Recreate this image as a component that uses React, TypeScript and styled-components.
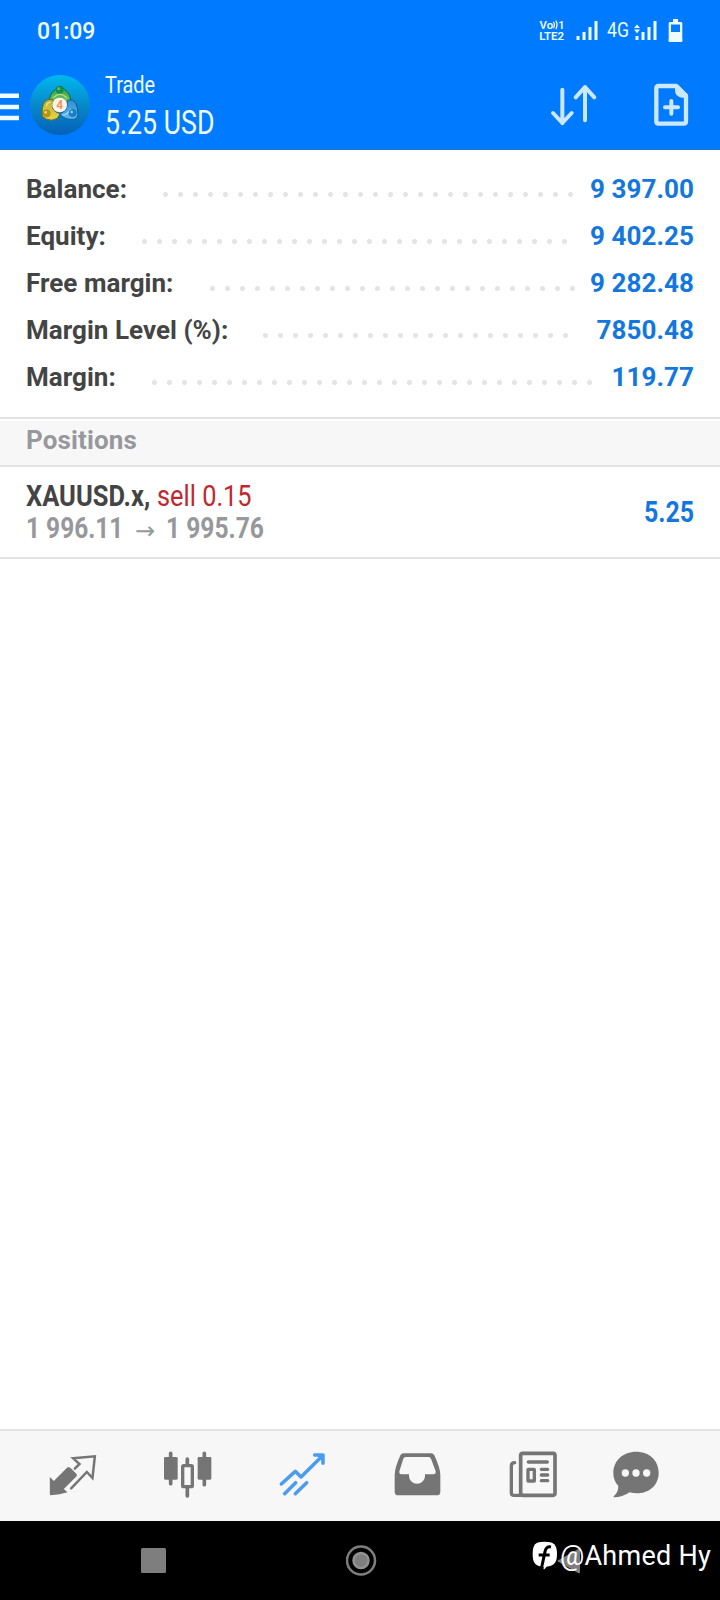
import React from "react";
import styled, { createGlobalStyle } from "styled-components";

const GlobalStyle = createGlobalStyle`
  * { box-sizing: border-box; }
  body { margin: 0; background: #fff; font-family: Roboto, "Liberation Sans", sans-serif; }
  svg { display: block; flex: none; }
`;

const Screen = styled.div`
  position: relative;
  display: flex;
  flex-direction: column;
  width: 720px;
  height: 1600px;
  overflow: hidden;
  background: #fff;
`;

const Condensed = styled.span<{ $size: number; $scale: number; $width: number; $weight?: number; $color?: string }>`
  display: block;
  flex: none;
  width: ${(p) => p.$width}px;
  font-size: ${(p) => p.$size}px;
  font-weight: ${(p) => p.$weight ?? 400};
  color: ${(p) => p.$color ?? "inherit"};
  white-space: pre;
  text-align: left;
  transform: scaleX(${(p) => p.$scale});
  transform-origin: left center;
`;

const Header = styled.header`
  height: 150px;
  background: #007aff;
  border-bottom: 1px solid #1a74cf;
  color: #effcff;
`;

const StatusBar = styled.div`
  display: flex;
  align-items: center;
  justify-content: space-between;
  height: 60px;
  padding: 2px 37px 0;
`;

const Clock = styled.span`
  padding-top: 2px;
  font-size: 23px;
  font-weight: 500;
  line-height: 26px;
`;

const StatusIcons = styled.div`
  display: flex;
  align-items: center;
`;

const Spacer = styled.span<{ $width: number }>`
  width: ${(p) => p.$width}px;
`;

const NetworkType = styled.span`
  width: 21px;
  margin: 0 6.500px 3px 7.500px;
`;

const Toolbar = styled.div`
  display: flex;
  align-items: center;
  height: 89px;
`;

const TitleBlock = styled.div`
  display: flex;
  flex-direction: column;
  flex: 1;
  padding-bottom: 2px;
  padding-left: 15px;
  line-height: 38px;
`;

const Summary = styled.section`
  height: 267px;
  padding: 15px 26px 0;
`;

const SummaryRow = styled.div`
  display: flex;
  align-items: center;
  height: 47px;
  font-size: 26px;
  font-weight: 700;
  color: #444;
`;

const Label = styled.span`
  flex: 1;
  letter-spacing: 0.03px;
`;

const Leader = styled.span<{ $count: number }>`
  width: ${(p) => p.$count * 15}px;
  height: 15px;
  margin-top: 11px;
  background: radial-gradient(circle at 7.5px 7.5px, #e4e4e4 2.1px, transparent 2.9px) 0 0 / 15px 15px;
`;

const Value = styled.span<{ $width: number }>`
  width: ${(p) => p.$width}px;
  text-align: right;
  white-space: nowrap;
  letter-spacing: 0.05px;
  color: #1377dd;
`;

const SectionTitle = styled.div`
  height: 50px;
  padding: 0 26px;
  border-top: 2px solid #e2e2e3;
  border-bottom: 2px solid #e2e2e3;
  background: linear-gradient(#fff 2px, #f7f7f7 2px);
  color: #97989c;
  font-size: 26px;
  font-weight: 700;
  letter-spacing: 0.12px;
  line-height: 43px;
`;

const Position = styled.div`
  display: flex;
  align-items: center;
  height: 92px;
  padding: 0 26px 2px;
  border-bottom: 2px solid #e2e2e3;
`;

const PositionInfo = styled.div`
  flex: 1;
`;

const Line = styled.div`
  display: flex;
  align-items: center;
  height: 32px;
`;

const Arrow = styled.span`
  width: 35px;
  padding: 8px 0 0 4px;
  font: 24px "DejaVu Sans", sans-serif;
  color: #97989c;
`;

const Content = styled.main`
  flex: 1;
`;

const TabBar = styled.nav`
  display: flex;
  height: 92px;
  padding-left: 15px;
  border-top: 2px solid #e2e2e3;
  background: #f7f7f7;
`;

const Tab = styled.div<{ $narrow?: boolean }>`
  display: flex;
  align-items: center;
  justify-content: center;
  width: ${(p) => (p.$narrow ? 92 : 115)}px;
  color: #757575;
`;

const SystemNav = styled.div`
  display: flex;
  align-items: center;
  justify-content: space-between;
  height: 79px;
  padding: 0 140px 0 141px;
  background: #000;
`;

const Watermark = styled.div`
  position: absolute;
  right: 6px;
  bottom: 26px;
  display: flex;
  align-items: center;
  gap: 2px;
  color: #fff;
`;

const Handle = styled.span`
  width: 154px;
  font-size: 27px;
  font-weight: 400;
  line-height: 36px;
  letter-spacing: 0.25px;
  white-space: nowrap;
`;

const summary = [
  { label: "Balance:", value: "9 397.00", count: 28, end: 116.5 },
  { label: "Equity:", value: "9 402.25", count: 29, end: 122.5 },
  { label: "Free margin:", value: "9 282.48", count: 25, end: 114.5 },
  { label: "Margin Level (%):", value: "7850.48", count: 21, end: 121.5 },
  { label: "Margin:", value: "119.77", count: 30, end: 97.5 },
];

const VolteIcon = () => (
  <svg width="26" height="22" viewBox="0 0 26 22" fill="#effcff" fontFamily="Roboto" fontWeight="600">
    <text x="0.6" y="8.500" fontSize="11" textLength="13.500" lengthAdjust="spacingAndGlyphs">Vo</text>
    <path d="M14.400 1.800q2 3 0 6.400M16.800 .6q2.400 4.200 0 8.600" fill="none" stroke="#effcff" strokeWidth="1.300" />
    <text x="19.300" y="8.500" fontSize="11">1</text>
    <text x="0.200" y="19.500" fontSize="11.500" textLength="24.800" lengthAdjust="spacingAndGlyphs">LTE2</text>
  </svg>
);

const SignalIcon = ({ data }: { data?: boolean }) => (
  <svg width="24" height="20" viewBox="0 0 24 20" fill="#effcff">
    <path d="M1.500 15h3v4h-3zM7.500 11h3v8h-3zM13.500 6h3v13h-3zM19.500 0h3v19h-3z" />
    {data && <path d="M0 7l3-3.600L6 7zM0 8.600h6l-3 3.600z" />}
  </svg>
);

const BatteryIcon = () => (
  <svg width="15" height="24" viewBox="0 0 15 24">
    <path d="M5 0h5v3h3q1.300 0 1.300 1.300v17.400q0 1.300-1.300 1.300H2Q.7 23 .7 21.700V4.300Q.7 3 2 3h3z" fill="#effcff" />
    <path d="M3 5.500h9v7.500H3z" fill="#007aff" />
    <path d="M.7 20h13.600v1.700q0 1.300-1.300 1.300H2Q.7 23 .7 21.700z" fill="#effcff" />
  </svg>
);

const MenuIcon = () => (
  <svg width="19" height="30" viewBox="0 0 19 30" fill="#effcff" style={{ marginTop: 4 }}>
    <path d="M0 1.500h19v4.500H0zM0 12.700h19v4.500H0zM0 23.800h19v4.500H0z" />
  </svg>
);

const Avatar = () => (
  <svg width="60" height="60" viewBox="0 0 180 180" style={{ marginLeft: 11 }}>
    <defs>
      <linearGradient id="sky" x1="0" y1="0" x2="0" y2="1">
        <stop offset="0" stopColor="#00b8ee" />
        <stop offset=".5" stopColor="#0789cb" />
        <stop offset="1" stopColor="#0560b8" />
      </linearGradient>
      <linearGradient id="leaf" x1="0" y1="0" x2="0" y2="1">
        <stop offset="0" stopColor="#2c9c4a" />
        <stop offset="1" stopColor="#8bcf67" />
      </linearGradient>
      <linearGradient id="gold" x1="0" y1="0" x2="0" y2="1">
        <stop offset="0" stopColor="#b9b23a" />
        <stop offset="1" stopColor="#e6d548" />
      </linearGradient>
      <linearGradient id="water" x1="0" y1="0" x2="0" y2="1">
        <stop offset="0" stopColor="#2f8fd0" />
        <stop offset="1" stopColor="#5cb9ee" />
      </linearGradient>
    </defs>
    <circle cx="90" cy="90" r="90" fill="url(#sky)" />
    <g strokeWidth="3">
      <path d="M76 44Q90 24 104 44Q120 54 122 76L112 96H66L58 76Q60 54 76 44z" fill="url(#leaf)" stroke="#126b3c" />
      <path d="M44 80Q58 68 70 76L68 101Q78 116 91 115L82 130Q65 140 48 132L37 124Q34 96 44 80z" fill="url(#gold)" stroke="#6b671f" />
      <path d="M112 77Q128 70 137 84Q144 98 144 118Q142 135 124 133Q104 134 88 116Q114 112 112 77z" fill="url(#water)" stroke="#155b99" />
      <path d="M70 68Q90 48 111 69" fill="none" stroke="#b4df85" strokeWidth="4" />
      <path d="M49 94Q50 82 62 82" fill="none" stroke="#e9e38c" strokeWidth="4" />
      <path d="M98 121Q112 120 123 102" fill="none" stroke="#a9dcf8" strokeWidth="4" />
    </g>
    <circle cx="89" cy="44" r="11" fill="#159346" stroke="#126b3c" />
    <circle cx="50" cy="115" r="11" fill="#b99611" stroke="#806f1f" />
    <circle cx="128" cy="114" r="11" fill="#1981cc" stroke="#155b99" />
    <circle cx="86" cy="41" r="4" fill="#63c77a" />
    <circle cx="47" cy="112" r="4" fill="#efdd61" />
    <circle cx="125" cy="111" r="4" fill="#83cff5" />
    <circle cx="89" cy="90" r="22" fill="#f8f4ef" />
    <text x="89" y="103" fontSize="36" fontWeight="700" textAnchor="middle" fill="#ef9650">4</text>
  </svg>
);

const SortIcon = () => (
  <svg width="50" height="44" viewBox="0 0 150 132" fill="none" stroke="#cce8ff" strokeWidth="12" strokeLinecap="round" strokeLinejoin="round">
    <path d="M43 20V121M15 90L43 120L71 90M111 112V12M83 43L111 12L139 43" />
  </svg>
);

const NewOrderIcon = () => (
  <svg width="36" height="44" viewBox="0 0 108 132" style={{ margin: "1px 31px 0 55px" }}>
    <path d="M17 9H70L99 39V115Q99 122 92 122H17Q10 122 10 115V16Q10 9 17 9z" fill="none" stroke="#cce8ff" strokeWidth="13" strokeLinejoin="round" />
    <path d="M66 6H76L104 34V44H86Q66 41 66 22z" fill="#cce8ff" />
    <path d="M55 54V92M36 73H75" stroke="#cce8ff" strokeWidth="12" strokeLinecap="round" />
  </svg>
);

const QuotesIcon = () => (
  <svg width="60" height="60" viewBox="129.500 77 180 180" fill="currentColor">
    <path d="M150 170L162 182L203 141Q209 139 213 144L231 162Q232 166 229 169L192 206L203 216Q180 223 153 225Q149 224 150 219z" />
    <path d="M225 145L239 131L220 114L285 108L278 173L261 155L214 204" fill="none" stroke="currentColor" strokeWidth="7.500" strokeLinecap="round" />
  </svg>
);

const ChartIcon = () => (
  <svg width="60" height="60" viewBox="474 77 180 180" fill="currentColor">
    <rect x="492" y="110" width="41" height="68" rx="4" />
    <rect x="593" y="110" width="41" height="68" rx="4" />
    <path d="M512 99V190M613 99V193M562 116V132M562 204V227" stroke="currentColor" strokeWidth="11" strokeLinecap="round" />
    <rect x="548" y="136" width="29" height="63" rx="3" fill="none" stroke="currentColor" strokeWidth="10" />
  </svg>
);

const TradeIcon = () => (
  <svg width="60" height="60" viewBox="99 77 180 180" fill="none" stroke="#4a9cf0" strokeWidth="10.500" strokeLinecap="round">
    <path d="M124 191L166 153L183 170L246 108M134 220L167 187M166 220L200 187" strokeLinejoin="round" />
    <path d="M224 104H249V129" strokeLinejoin="round" />
    <path d="M229 104H249V126z" fill="#4a9cf0" stroke="none" />
  </svg>
);

const InboxIcon = () => (
  <svg width="60" height="60" viewBox="444 77 180 180">
    <path fill="currentColor" fillRule="evenodd" d="M491 99H573Q580 99 583 105Q601 144 601 164V214Q601 225 590 225H475Q464 225 464 214V164Q464 144 481 105Q484 99 491 99zM497 110Q492 110 490 115L478 153Q477 162 484 162H507V167A24 23 0 0 0 555 167V162H581Q588 162 587 153L573 115Q571 110 566 110z" />
  </svg>
);

const NewsIcon = () => (
  <svg width="60" height="60" viewBox="69 77 180 180" fill="none" stroke="currentColor" strokeWidth="10" strokeLinecap="round" strokeLinejoin="round">
    <rect x="122" y="99" width="103" height="126" rx="6" strokeWidth="11" />
    <path d="M104 127Q94 127 94 137V217Q94 225 102 225H130M145 125H202M184 147H203M184 164H203M184 181H203" />
    <rect x="144" y="147" width="19" height="35" rx="1" />
  </svg>
);

const MessagesIcon = () => (
  <svg width="60" height="60" viewBox="378 77 180 180">
    <path d="M468 94C507 94 536 119 536 157C536 197 505 219 470 219Q459 219 449 216Q427 231 402 231Q398 229 405 224Q415 214 415 197Q400 181 400 158C400 120 430 94 468 94z" fill="currentColor" />
    <g fill="#f7f7f7">
      <circle cx="436" cy="158" r="11" />
      <circle cx="468" cy="158" r="11" />
      <circle cx="500" cy="158" r="11" />
    </g>
  </svg>
);

const FacebookMark = () => (
  <svg width="26" height="30" viewBox="0 0 78 90">
    <path d="M37 2C65 2 75 10 75 39C75 67 65 77 37 77C10 77 2 67 2 39C2 10 10 2 37 2z" fill="#fff" />
    <path d="M57 18Q42 15 39 32L29 79M20 42H53" fill="none" stroke="#000" strokeWidth="9" />
    <path d="M36 70H50L38 84Q33 87 35 80z" fill="#fff" />
  </svg>
);

export default function App() {
  return (
    <Screen>
      <GlobalStyle />
      <Header>
        <StatusBar>
          <Clock>01:09</Clock>
          <StatusIcons>
            <VolteIcon />
            <Spacer $width={10} />
            <SignalIcon />
            <NetworkType>
              <Condensed $size={21} $scale={0.84} $width={21}>4G</Condensed>
            </NetworkType>
            <SignalIcon data />
            <Spacer $width={10} />
            <BatteryIcon />
          </StatusIcons>
        </StatusBar>
        <Toolbar>
          <MenuIcon />
          <Avatar />
          <TitleBlock>
            <Condensed $size={24} $scale={0.83} $width={52}>Trade</Condensed>
            <Condensed $size={33} $scale={0.81} $width={110}>5.25 USD</Condensed>
          </TitleBlock>
          <SortIcon />
          <NewOrderIcon />
        </Toolbar>
      </Header>

      <Summary>
        {summary.map((row) => (
          <SummaryRow key={row.label}>
            <Label>{row.label}</Label>
            <Leader $count={row.count} />
            <Value $width={row.end}>{row.value}</Value>
          </SummaryRow>
        ))}
      </Summary>

      <SectionTitle>Positions</SectionTitle>
      <Position>
        <PositionInfo>
          <Line>
            <Condensed $size={30} $scale={0.85} $width={131} $weight={700} $color="#444">XAUUSD.x,</Condensed>
            <Condensed $size={30} $scale={0.845} $width={96} $color="#c1272d">sell 0.15</Condensed>
          </Line>
          <Line>
            <Condensed $size={30} $scale={0.815} $width={105} $weight={700} $color="#97989c">1 996.11</Condensed>
            <Arrow>→</Arrow>
            <Condensed $size={30} $scale={0.82} $width={100} $weight={700} $color="#97989c">1 995.76</Condensed>
          </Line>
        </PositionInfo>
        <Condensed $size={30} $scale={0.83} $width={50} $weight={700} $color="#1377dd">5.25</Condensed>
      </Position>

      <Content />

      <TabBar>
        <Tab><QuotesIcon /></Tab>
        <Tab><ChartIcon /></Tab>
        <Tab><TradeIcon /></Tab>
        <Tab><InboxIcon /></Tab>
        <Tab><NewsIcon /></Tab>
        <Tab $narrow><MessagesIcon /></Tab>
      </TabBar>
      <SystemNav>
        <svg width="26" height="26"><rect x="0" y="0" width="25" height="25" rx="1.500" fill="#7e7e7e" /></svg>
        <svg width="32" height="32">
          <circle cx="15" cy="15.500" r="14" fill="none" stroke="#7e7e7e" strokeWidth="2.500" />
          <circle cx="15" cy="15.500" r="7.500" fill="#7e7e7e" stroke="#929292" strokeWidth="2.500" />
        </svg>
        <svg width="24" height="26"><path d="M1 13L23 .5Q24 .5 24 2V24Q24 26 22 25z" fill="#7e7e7e" /></svg>
      </SystemNav>
      <Watermark>
        <FacebookMark />
        <Handle>@Ahmed Hy</Handle>
      </Watermark>
    </Screen>
  );
}
